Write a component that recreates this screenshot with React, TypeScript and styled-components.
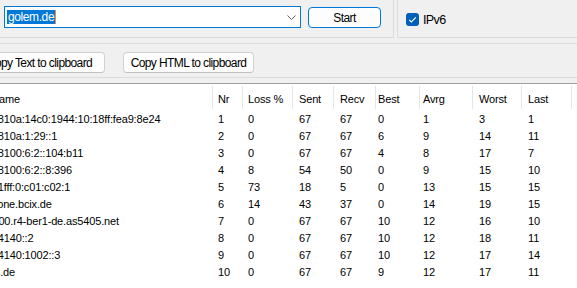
import React from "react";
import styled, { createGlobalStyle } from "styled-components";

const GlobalStyle = createGlobalStyle`
  html, body {
    margin: 0;
    padding: 0;
    background: #f0f0f0;
    overflow: hidden;
  }
`;

const uiFont = `"Liberation Sans", Arial, sans-serif`;
const listFont = `"Liberation Sans", Arial, sans-serif`;

const columns = [
  { title: "Hostname", width: 248, pad: 6 },
  { title: "Nr", width: 30, pad: 5 },
  { title: "Loss %", width: 50, pad: 5 },
  { title: "Sent", width: 41, pad: 6 },
  { title: "Recv", width: 42, pad: 6 },
  { title: "Best", width: 44, pad: 2 },
  { title: "Avrg", width: 53, pad: 3 },
  { title: "Worst", width: 49, pad: 6 },
  { title: "Last", width: 50, pad: 6 },
];

const gridTemplate = columns.map((c) => `${c.width}px`).join(" ") + " 1fr";

const hops: (string | number)[][] = [
  ["2a02:810a:14c0:1944:10:18ff:fea9:8e24", 1, 0, 67, 67, 0, 1, 3, 1],
  ["2a02:810a:1:29::1", 2, 0, 67, 67, 6, 9, 14, 11],
  ["2a02:8100:6:2::104:b11", 3, 0, 67, 67, 4, 8, 17, 7],
  ["2a02:8100:6:2::8:396", 4, 8, 54, 50, 0, 9, 15, 10],
  ["2a02:1fff:0:c01:c02:1", 5, 73, 18, 5, 0, 13, 15, 15],
  ["vodafone.bcix.de", 6, 14, 43, 37, 0, 14, 19, 15],
  ["ae1-100.r4-ber1-de.as5405.net", 7, 0, 67, 67, 10, 12, 16, 10],
  ["2a00:4140::2", 8, 0, 67, 67, 10, 12, 18, 11],
  ["2a00:4140:1002::3", 9, 0, 67, 67, 10, 12, 17, 14],
  ["golem.de", 10, 0, 67, 67, 9, 12, 17, 11],
];

const Viewport = styled.div`
  width: 577px;
  height: 288px;
  overflow: hidden;
  background: #f0f0f0;
`;

/* the window is wider than the shot; its left edge is cut off */
const Window = styled.div`
  margin-left: -35px;
  width: 612px;
  height: 288px;
  display: flex;
  flex-direction: column;
`;

const TopRow = styled.div`
  display: flex;
  gap: 3px;
  height: 38px;
  flex-shrink: 0;
`;

const LeftGroup = styled.div`
  width: 429px;
  box-sizing: border-box;
  border-right: 1px solid #dcdcdc;
  border-bottom: 1px solid #dcdcdc;
  display: flex;
  align-items: flex-start;
  gap: 7px;
  padding: 6px 0 0 39px;
`;

const RightGroup = styled.div`
  flex: 1;
  box-sizing: border-box;
  border-left: 1px solid #dcdcdc;
  border-bottom: 1px solid #dcdcdc;
  display: flex;
  align-items: flex-start;
  gap: 4px;
  padding: 13px 0 0 8px;
`;

const Combo = styled.div`
  width: 297px;
  height: 22px;
  box-sizing: border-box;
  border: 1px solid #0078d7;
  background: #fff;
  display: flex;
  align-items: center;
  padding: 0 4px 0 2px;
`;

const Selection = styled.span`
  background: #0078d7;
  color: #fff;
  font-family: ${uiFont};
  font-size: 12px;
  letter-spacing: -0.4px;
  height: 14px;
  line-height: 14px;
  padding: 0 1px;
`;

const Caret = styled.span`
  width: 1px;
  height: 14px;
  background: #ff8728;
`;

const Chevron = styled.svg`
  margin-left: auto;
`;

const Button = styled.button<{ $focused?: boolean; $width: number }>`
  width: ${(p) => p.$width}px;
  height: 21px;
  flex-shrink: 0;
  box-sizing: border-box;
  border: 1px solid ${(p) => (p.$focused ? "#0078d7" : "#d0d0d0")};
  border-bottom-color: ${(p) => (p.$focused ? "#0078d7" : "#c0c0c0")};
  border-radius: 4px;
  background: #fdfdfd;
  color: #000;
  font-family: ${uiFont};
  font-size: 12px;
  letter-spacing: -0.6px;
  white-space: nowrap;
  padding: 0;
  margin-top: ${(p) => (p.$focused ? 1 : 0)}px;
`;

const CheckBox = styled.span`
  width: 13px;
  height: 13px;
  border-radius: 3px;
  background: #005fb8;
  display: flex;
  align-items: center;
  justify-content: center;
`;

const Label = styled.span`
  font-family: ${uiFont};
  font-size: 12.5px;
  letter-spacing: -0.6px;
  line-height: 13px;
  padding-top: 1px;
  color: #000;
`;

const ButtonPanel = styled.div`
  margin-top: 5px;
  height: 35px;
  flex-shrink: 0;
  box-sizing: border-box;
  border-top: 1px solid #dcdcdc;
  border-bottom: 1px solid #dcdcdc;
  display: flex;
  gap: 18px;
  padding: 8px 0 0 9px;
`;

const List = styled.div`
  margin-top: 5px;
  flex: 1;
  background: #fff;
  border-top: 1px solid #a0a0a0;
  font-family: ${listFont};
  font-size: 11px;
  letter-spacing: -0.15px;
  color: #000;
`;

const HeaderRow = styled.div`
  display: grid;
  grid-template-columns: ${gridTemplate};
  height: 26px;
`;

const HeaderCell = styled.div<{ $pad: number }>`
  margin: 2px 0 1px;
  border-right: 1px solid #e5e5e5;
  display: flex;
  align-items: center;
  padding: 2px 0 0 ${(p) => p.$pad}px;
  white-space: nowrap;
  overflow: hidden;
`;

const Row = styled.div`
  display: grid;
  grid-template-columns: ${gridTemplate};
  height: 17px;
`;

const Cell = styled.div<{ $pad: number }>`
  display: flex;
  align-items: center;
  padding: 1px 0 0 ${(p) => p.$pad}px;
  white-space: nowrap;
  overflow: hidden;
`;

export default function App() {
  return (
    <>
      <GlobalStyle />
      <Viewport>
        <Window>
          <TopRow>
            <LeftGroup>
              <Combo>
                <Selection>golem.de</Selection>
                <Caret />
                <Chevron width="9" height="5" viewBox="0 0 9 5">
                  <polyline
                    points="0.5,0.5 4.5,4.5 8.5,0.5"
                    fill="none"
                    stroke="#606060"
                    strokeWidth="1"
                  />
                </Chevron>
              </Combo>
              <Button $focused $width={73}>
                Start
              </Button>
            </LeftGroup>
            <RightGroup>
              <CheckBox>
                <svg width="13" height="13" viewBox="0 0 13 13">
                  <path
                    d="M3.2 6.8 L5.4 9 L9.8 4.4"
                    fill="none"
                    stroke="#fff"
                    strokeWidth="1.2"
                  />
                </svg>
              </CheckBox>
              <Label>IPv6</Label>
            </RightGroup>
          </TopRow>

          <ButtonPanel>
            <Button $width={131}>Copy Text to clipboard</Button>
            <Button $width={131}>Copy HTML to clipboard</Button>
          </ButtonPanel>

          <List>
            <HeaderRow>
              {columns.map((c) => (
                <HeaderCell key={c.title} $pad={c.pad}>
                  {c.title}
                </HeaderCell>
              ))}
            </HeaderRow>
            {hops.map((hop) => (
              <Row key={hop[1]}>
                {hop.map((v, i) => (
                  <Cell key={i} $pad={columns[i].pad}>
                    {v}
                  </Cell>
                ))}
              </Row>
            ))}
          </List>
        </Window>
      </Viewport>
    </>
  );
}
